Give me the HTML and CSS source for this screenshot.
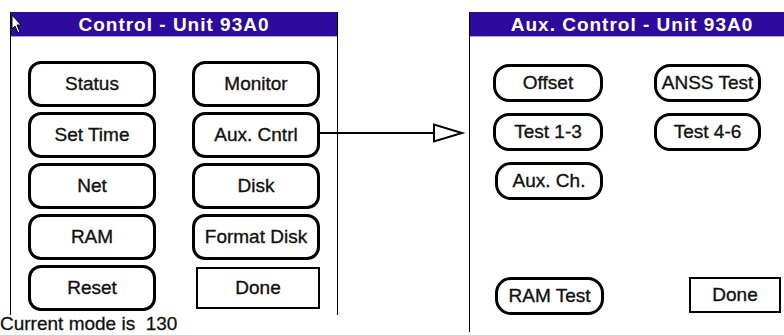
FILE: index.html
```html
<!DOCTYPE html>
<html lang="en">
<head>
    <meta charset="UTF-8">
    <title>Control - Unit 93A0</title>
    <link rel="stylesheet" href="styles.css">
</head>
<body>
    <div class="page">
        <div class="left-col">
            <div class="screen main">
                <div class="titlebar">
                    <svg class="cursor" width="12" height="20" viewBox="0 0 12 20">
                        <path d="M1 1 L1 15 L4 12 L7 19 L9 18 L6 11 L10 11 Z" fill="#fff" stroke="#000" stroke-width="1"/>
                    </svg>
                    Control - Unit 93A0
                </div>
                <div class="grid">
                    <div class="btn">Status</div>
                    <div class="btn">Monitor</div>
                    <div class="btn">Set Time</div>
                    <div class="btn">Aux. Cntrl</div>
                    <div class="btn">Net</div>
                    <div class="btn">Disk</div>
                    <div class="btn">RAM</div>
                    <div class="btn">Format Disk</div>
                    <div class="btn">Reset</div>
                    <div class="btn done">Done</div>
                </div>
            </div>
            <div class="mode">Current mode is  130</div>
        </div>

        <div class="screen aux">
            <div class="titlebar">Aux. Control - Unit 93A0</div>
            <div class="aux-grid">
                <div class="btn pill">Offset</div>
                <div class="btn pill">ANSS Test</div>
                <div class="btn pill">Test 1-3</div>
                <div class="btn pill">Test 4-6</div>
                <div class="btn pill">Aux. Ch.</div>
            </div>
            <div class="aux-bottom">
                <div class="btn pill">RAM Test</div>
                <div class="btn done small">Done</div>
            </div>
        </div>

        <!-- connector from Aux. Cntrl to the aux screen -->
        <svg class="arrow" width="150" height="24" viewBox="0 0 150 24">
            <line x1="0" y1="12" x2="114" y2="12" stroke="#000" stroke-width="2"/>
            <polygon points="114,3.5 114,20.5 142,12" fill="#fff" stroke="#000" stroke-width="2"/>
        </svg>
    </div>
</body>
</html>
```

FILE: styles.css
```css
body { margin: 0; background: #fff; font-family: "Liberation Sans", Arial, sans-serif; color: #111; }
.page { position: relative; width: 784px; height: 335px; overflow: hidden; display: flex; align-items: flex-start; }
.left-col { display: flex; flex-direction: column; }
.screen { margin-top: 12px; border-left: 1px solid #000; background: #fff; }
.main { margin-left: 10px; width: 326px; height: 303px; border-right: 1px solid #000; }
.titlebar { position: relative; height: 24px; background: #2c0b9e; border-bottom: 1px solid #a99de0; color: #fff; font-weight: bold; font-size: 19px; letter-spacing: 1px; text-align: center; line-height: 25px; }
.cursor { position: absolute; left: 0; top: 2px; }
.grid { display: grid; grid-template-columns: 128px 128px; grid-auto-rows: 46px; column-gap: 36px; row-gap: 5px; padding: 24px 0 0 17px; }
.btn { box-sizing: border-box; border: 3px solid #000; border-radius: 13px; display: flex; align-items: center; justify-content: center; font-size: 19px; white-space: nowrap; -webkit-text-stroke: 0.35px #111; }
.done { border: 2px solid #000; border-radius: 0; margin: 2px 0 2px 4px; }
.mode { font-size: 19px; white-space: pre; margin-top: -1px; line-height: 20px; -webkit-text-stroke: 0.3px #111; }
.aux { margin-left: 131px; flex: 1; height: 320px; }
.aux .titlebar { margin-right: -10px; }
.aux-grid { display: grid; grid-template-columns: 110px 107px; grid-auto-rows: 38px; column-gap: 51px; row-gap: 11px; padding: 27px 0 0 23px; }
.pill { border-radius: 16px; }
.aux-grid .pill:nth-child(5) { margin-left: 2px; }
.aux-bottom { display: flex; align-items: flex-start; padding: 77px 0 0 25px; }
.aux-bottom .pill { width: 109px; height: 38px; }
.done.small { width: 92px; height: 36px; margin: 0 0 0 85px; }
.arrow { position: absolute; left: 320px; top: 121px; }
```
